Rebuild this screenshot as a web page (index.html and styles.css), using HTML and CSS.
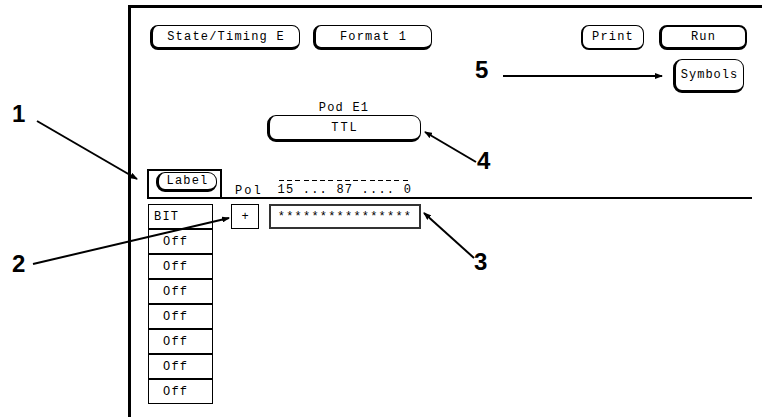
FILE: index.html
```html
<!DOCTYPE html>
<html>
<head>
<meta charset="utf-8">
<link rel="stylesheet" href="styles.css">
</head>
<body>
<div class="page">
  <div class="screen">
    <div class="toprow">
      <div class="btn btn-state">State/Timing E</div>
      <div class="btn btn-format">Format 1</div>
      <div class="spacer"></div>
      <div class="btn btn-print">Print</div>
      <div class="btn btn-run">Run</div>
    </div>
    <div class="symrow">
      <div class="btn btn-symbols">Symbols</div>
    </div>
    <div class="pod">
      <div class="pod-label">Pod E1</div>
      <div class="btn btn-ttl">TTL</div>
    </div>
    <div class="header">
      <div class="labelbox"><div class="btn btn-label">Label</div></div>
      <div class="pol">Pol</div>
      <div class="bits"><span class="dashes"></span><span class="bits-text">15 ... 87 .... 0</span></div>
    </div>
    <div class="grid">
      <div class="col">
        <div class="cell bit">BIT</div>
        <div class="cell off">Off</div>
        <div class="cell off">Off</div>
        <div class="cell off">Off</div>
        <div class="cell off">Off</div>
        <div class="cell off">Off</div>
        <div class="cell off">Off</div>
        <div class="cell off">Off</div>
      </div>
      <div class="polbox">+</div>
      <div class="patbox">****************</div>
    </div>
  </div>
  <svg class="callouts" width="762" height="417" viewBox="0 0 762 417">
    <defs>
      <marker id="ah" markerWidth="8" markerHeight="6" refX="7" refY="3" orient="auto" markerUnits="userSpaceOnUse">
        <path d="M0,0 L8,3 L0,6 z" fill="#000"/>
      </marker>
    </defs>
    <text class="num" x="12" y="122">1</text>
    <text class="num" x="12" y="272">2</text>
    <text class="num" x="474" y="270">3</text>
    <text class="num" x="477" y="169">4</text>
    <text class="num" x="475" y="78">5</text>
    <line x1="37" y1="121" x2="137" y2="179" marker-end="url(#ah)"/>
    <line x1="33" y1="264" x2="229" y2="218" marker-end="url(#ah)"/>
    <line x1="474" y1="258" x2="424" y2="213" marker-end="url(#ah)"/>
    <line x1="476" y1="162" x2="425" y2="132" marker-end="url(#ah)"/>
    <line x1="503" y1="76" x2="662" y2="76" marker-end="url(#ah)"/>
  </svg>
</div>
</body>
</html>
```
FILE: styles.css
```css
* { box-sizing: border-box; }
html, body { margin: 0; padding: 0; background: #fff; }
body {
  width: 762px;
  height: 417px;
  overflow: hidden;
  font-family: "Liberation Mono", "DejaVu Sans Mono", monospace;
  font-size: 12px;
  letter-spacing: 1.2px;
  color: #000;
}
.page {
  position: relative;
  width: 762px;
  height: 417px;
  padding: 5px 0 0 128px;
}
.screen {
  height: 412px;
  border-top: 3px solid #000;
  border-left: 3px solid #000;
  display: flex;
  flex-direction: column;
}
.btn {
  display: flex;
  align-items: center;
  justify-content: center;
  border-style: solid;
  border-color: #000;
  border-width: 1px 1px 3px 3px;
  border-radius: 8px;
  line-height: 1;
  white-space: nowrap;
  background: #fff;
}
.toprow {
  display: flex;
  margin-top: 17px;
  padding-left: 19px;
  padding-right: 15px;
  height: 25px;
}
.btn-state { width: 150px; }
.btn-format { width: 119px; margin-left: 13px; }
.spacer { flex: 1; }
.btn-print { width: 63px; border-width: 1px 1px 2px 2px; }
.btn-run { width: 88px; margin-left: 15px; border-width: 2px 2px 3px 3px; }
.symrow {
  display: flex;
  justify-content: flex-end;
  padding-right: 18px;
  margin-top: 9px;
}
.btn-symbols { width: 71px; height: 34px; border-radius: 9px; border-width: 1px 1px 3px 3px; letter-spacing: 1px; }
.pod {
  margin-top: 10px;
  margin-left: 136px;
  width: 154px;
  display: flex;
  flex-direction: column;
  align-items: center;
}
.pod-label { height: 12px; line-height: 10px; }
.btn-ttl { width: 154px; height: 27px; border-radius: 9px; letter-spacing: 2px; }
.header {
  display: flex;
  align-items: flex-end;
  margin-top: 27px;
  margin-left: 16px;
  margin-right: 10px;
  border-bottom: 2px solid #000;
}
.labelbox {
  width: 75px;
  height: 28px;
  border: 2px solid #000;
  border-bottom: none;
  padding: 1px 0 0 7px;
}
.btn-label { width: 61px; height: 20px; border-radius: 9px; }
.pol { margin-left: 13px; line-height: 12px; letter-spacing: 2px; }
.bits {
  margin-left: 15px;
  display: flex;
  flex-direction: column;
  align-items: flex-start;
}
.dashes {
  display: block;
  width: 132px;
  height: 1px;
  margin-bottom: 4px;
  margin-left: 1px;
  background: repeating-linear-gradient(90deg, #000 0 5px, transparent 5px 8.25px);
}
.bits-text { line-height: 11px; padding-bottom: 1px; }
.grid {
  display: flex;
  align-items: flex-start;
  margin-top: 5px;
  margin-left: 17px;
}
.col { display: flex; flex-direction: column; width: 65px; }
.cell {
  height: 25px;
  border: 1px solid #000;
  display: flex;
  align-items: center;
  line-height: 1;
}
.bit { padding-left: 5px; }
.off { padding-left: 14px; }
.polbox {
  margin-left: 18px;
  width: 28px;
  height: 25px;
  border: 1px solid #000;
  display: flex;
  align-items: center;
  justify-content: center;
  letter-spacing: 0;
}
.patbox {
  margin-left: 10px;
  width: 152px;
  height: 25px;
  border: 2px solid #333;
  display: flex;
  align-items: center;
  justify-content: center;
}
.callouts {
  position: absolute;
  left: 0;
  top: 0;
  pointer-events: none;
}
.callouts line { stroke: #000; stroke-width: 2; }
.num {
  font-family: "Liberation Sans", Arial, sans-serif;
  font-weight: bold;
  font-size: 24px;
  letter-spacing: 0;
  fill: #000;
}
```
